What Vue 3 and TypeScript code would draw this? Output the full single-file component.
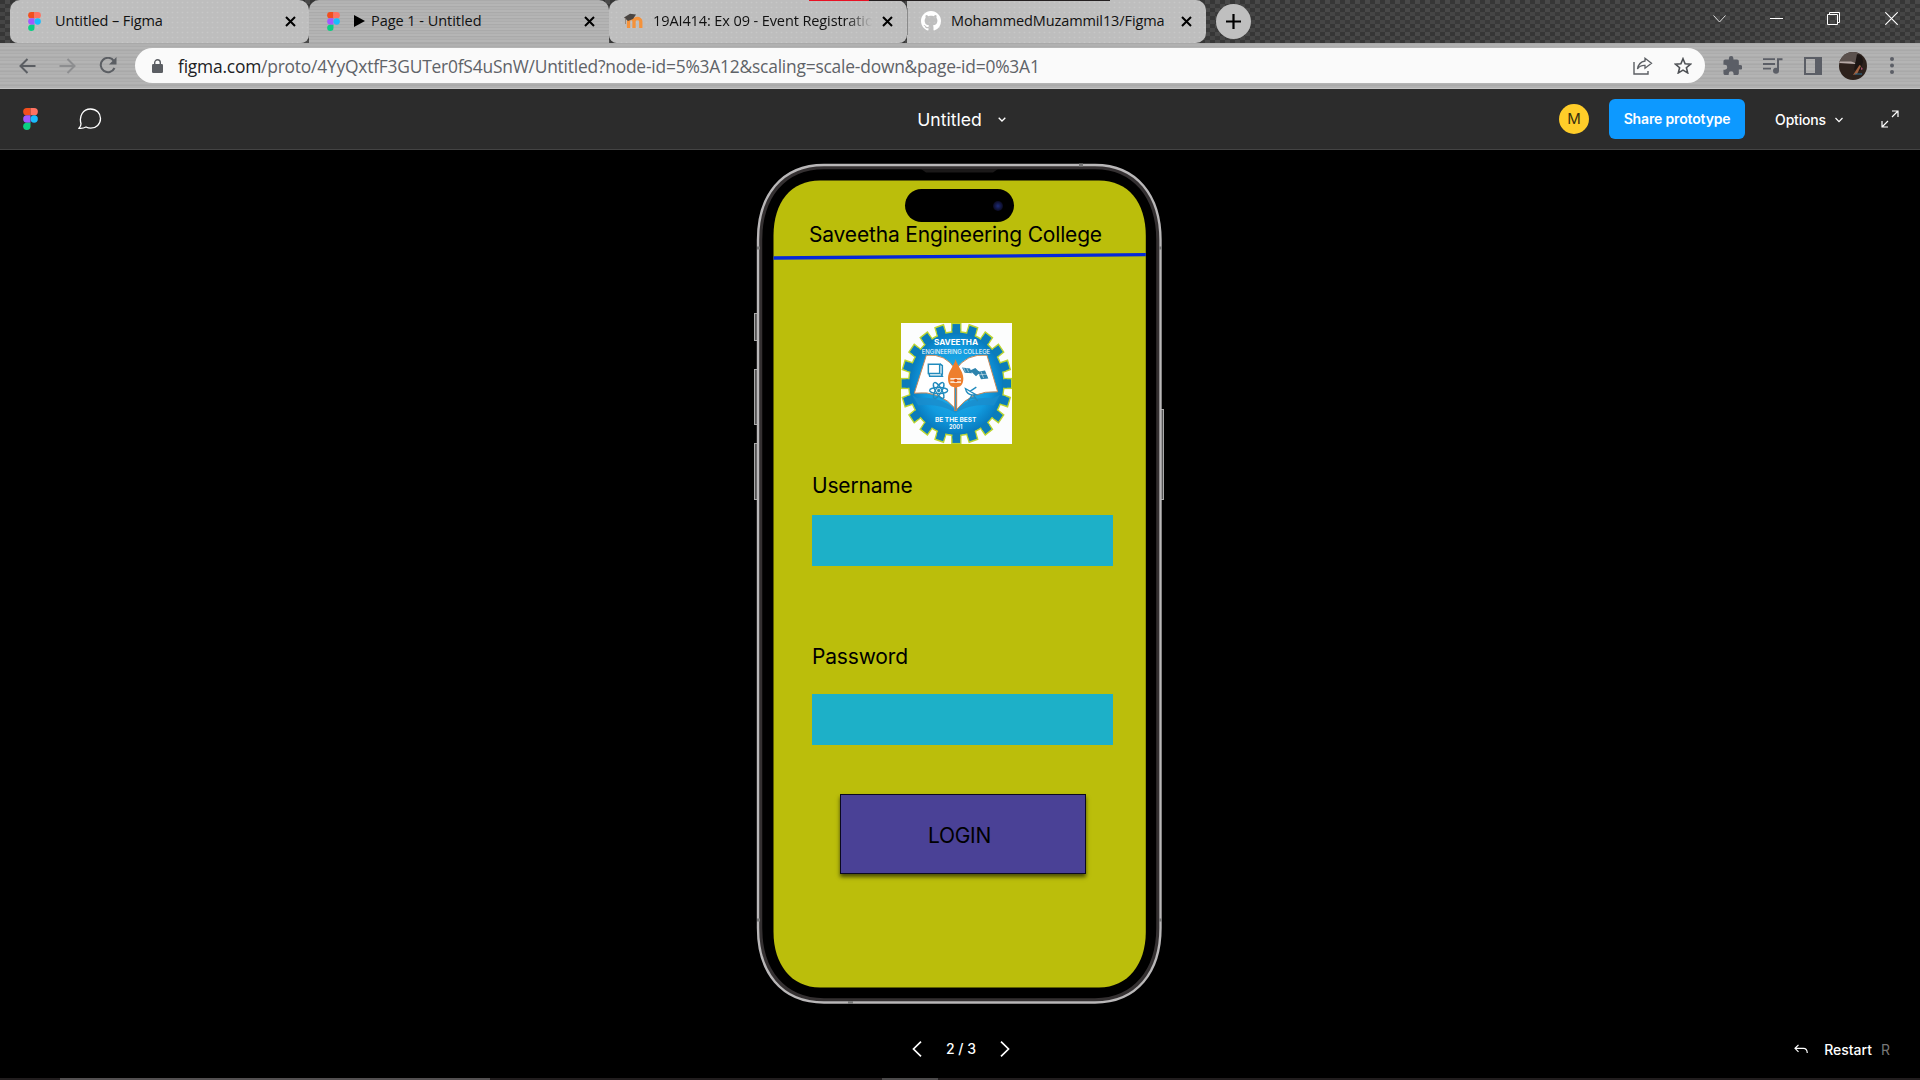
<script setup lang="ts">
interface Tab {
  title: string
  icon: 'figma' | 'moodle' | 'github'
  width: number
  active?: boolean
  play?: boolean
  spacing: string
}

const tabs: Tab[] = [
  { title: 'Untitled – Figma', icon: 'figma', width: 299, spacing: '-0.1px' },
  { title: 'Page 1 - Untitled', icon: 'figma', width: 300, active: true, play: true, spacing: '-0.04px' },
  { title: '19AI414: Ex 09 - Event Registration', icon: 'moodle', width: 298, spacing: '-0.1px' },
  { title: 'MohammedMuzammil13/Figma', icon: 'github', width: 299, spacing: '-0.1px' },
]

const toothAngles: number[] = Array.from({ length: 20 }, (_, i) => i * 18)
</script>

<template>
  <div class="window">
    <div class="tabstrip">
      <div class="edge"></div>
      <div
        v-for="tab in tabs"
        :key="tab.title"
        class="tab"
        :class="[tab.icon, { active: tab.active }]"
        :style="{ width: tab.width + 'px' }"
      >
        <svg v-if="tab.icon === 'figma'" class="fav" width="13" height="19" viewBox="0 0 20 30">
          <path d="M5 0h5v10H5A5 5 0 0 1 5 0z" fill="#f24e1e" />
          <path d="M10 0h5a5 5 0 0 1 0 10h-5z" fill="#ff7262" />
          <path d="M5 10h5v10H5a5 5 0 0 1 0-10z" fill="#a259ff" />
          <circle cx="15" cy="15" r="5" fill="#1abcfe" />
          <path d="M5 20h5v5a5 5 0 1 1-5-5z" fill="#0acf83" />
        </svg>
        <svg v-else-if="tab.icon === 'moodle'" class="fav" width="20" height="16" viewBox="0 0 20 16">
          <path d="M4.500 15V8.500c0-4 5.500-4 5.500 0V15M10 15V8.500c0-4 6.800-4 6.800 0V15" fill="none" stroke="#f5923a" stroke-width="3.300" />
          <path d="M0 4.500L6 .8l6 .8-3 4.500-5 1.800z" fill="#4a4542" />
          <path d="M1.500 5v6" stroke="#8a7c70" stroke-width=".8" />
        </svg>
        <svg v-else class="fav" width="20" height="20" viewBox="0 0 16 16">
          <path fill="#fff" d="M8 0C3.580 0 0 3.580 0 8c0 3.540 2.290 6.530 5.470 7.590.4.070.550-.170.550-.380 0-.190-.010-.820-.010-1.490-2.010.370-2.530-.490-2.690-.940-.090-.230-.480-.940-.820-1.130-.280-.150-.680-.520-.010-.530.630-.010 1.080.580 1.230.820.720 1.210 1.870.870 2.330.660.070-.520.280-.870.510-1.070-1.780-.200-3.640-.890-3.640-3.950 0-.870.310-1.590.820-2.150-.080-.200-.360-1.020.080-2.120 0 0 .670-.210 2.200.820.640-.180 1.320-.270 2-.270s1.360.090 2 .270c1.530-1.040 2.200-.820 2.200-.820.440 1.100.160 1.920.080 2.120.510.560.820 1.270.820 2.150 0 3.070-1.870 3.750-3.650 3.950.290.250.540.730.540 1.480 0 1.070-.010 1.930-.010 2.200 0 .210.150.460.550.380A8.010 8.010 0 0 0 16 8c0-4.420-3.580-8-8-8z" />
        </svg>
        <svg v-if="tab.play" class="play" width="11" height="12" viewBox="0 0 11 12"><path d="M0 0l11 6-11 6z" fill="#000" /></svg>
        <span class="title" :style="{ letterSpacing: tab.spacing }">{{ tab.title }}</span>
        <svg class="close" width="11" height="11" viewBox="0 0 11 11"><path d="M1 1l9 9M10 1l-9 9" stroke="#000" stroke-width="2" /></svg>
      </div>
      <button class="newtab">
        <svg width="15" height="15" viewBox="0 0 15 15"><path d="M7.500 0v15M0 7.500h15" stroke="#000" stroke-width="2.200" /></svg>
      </button>
      <div class="wincontrols">
        <svg width="13" height="8" viewBox="0 0 13 8"><path d="M.5.5l6 6.500 6-6.500" fill="none" stroke="#ddd" /></svg>
        <svg width="13" height="13" viewBox="0 0 13 13"><path d="M0 6.500h13" stroke="#fff" /></svg>
        <svg width="13" height="13" viewBox="0 0 13 13"><path d="M.5 2.500h10v10H.5zM2.500 2.500v-2h10v10h-2" fill="none" stroke="#fff" /></svg>
        <svg width="13" height="13" viewBox="0 0 13 13"><path d="M.3.3l12.400 12.400M12.700.3L.3 12.700" stroke="#fff" stroke-width="1.200" /></svg>
      </div>
      <div class="topline"></div>
    </div>

    <div class="toolbar">
      <svg class="back" width="17" height="16" viewBox="0 0 17 16"><path d="M16.500 8H1.500M8.500 1L1.500 8l7 7" fill="none" stroke="#5b5e63" stroke-width="2" /></svg>
      <svg class="fwd" width="17" height="16" viewBox="0 0 17 16"><path d="M.5 8h15M8.500 1l7 7-7 7" fill="none" stroke="#8d8e90" stroke-width="2" /></svg>
      <svg class="reload" width="18" height="17" viewBox="0 0 18 17">
        <path d="M14.800 3.800A7.200 7.200 0 1 0 15.500 11" fill="none" stroke="#5b5e63" stroke-width="2" />
        <path d="M17.500 0v7.500H10z" fill="#5b5e63" />
      </svg>
      <div class="omnibox">
        <svg class="lock" width="11" height="14" viewBox="0 0 11 14">
          <rect y="5" width="11" height="9" rx="1.200" fill="#5b5e63" />
          <path d="M2.700 5.500V3.600a2.800 2.800 0 0 1 5.600 0v1.900" fill="none" stroke="#5b5e63" stroke-width="1.400" />
        </svg>
        <span class="url"><b>figma.com</b>/proto/4YyQxtfF3GUTer0fS4uSnW/Untitled?node-id=5%3A12&amp;scaling=scale-down&amp;page-id=0%3A1</span>
        <svg class="share" width="20" height="18" viewBox="0 0 20 18">
          <path d="M1 5v12h14v-3" fill="none" stroke="#5b5e63" stroke-width="1.400" />
          <path d="M12 1.200l6.500 5-6.500 5V8.400c-3.500-.2-5.800 1-7.500 3.600.7-4.700 3.500-7.300 7.500-8z" fill="none" stroke="#5b5e63" stroke-width="1.300" />
        </svg>
        <svg width="18" height="17" viewBox="0 0 18 17"><path d="M9 1.700l2.100 5 5.400.5-4.100 3.500 1.300 5.200L9 13.100l-4.700 2.800 1.300-5.200-4.100-3.500 5.400-.5z" fill="none" stroke="#4e5155" stroke-width="1.600" /></svg>
      </div>
      <svg class="puzzle" width="19" height="19" viewBox="1.500 1 21 21"><path fill="#5b5e66" d="M20.500 11H19V7c0-1.100-.9-2-2-2h-4V3.500a2.500 2.500 0 0 0-5 0V5H4c-1.100 0-2 .9-2 2v3.800h1.500a2.700 2.700 0 0 1 0 5.400H2V20c0 1.100.9 2 2 2h3.800v-1.500a2.700 2.700 0 0 1 5.400 0V22H17c1.100 0 2-.9 2-2v-4h1.500a2.500 2.500 0 0 0 0-5z" /></svg>
      <svg class="music" width="20" height="16" viewBox="0 0 20 16">
        <path d="M0 1.200h12M0 6h12M0 10.700h8" stroke="#5b5e66" stroke-width="1.800" />
        <circle cx="13" cy="12.700" r="3" fill="#5b5e66" />
        <path d="M15 13V1.200h4.500" fill="none" stroke="#5b5e66" stroke-width="2" />
      </svg>
      <svg class="panel" width="18" height="18" viewBox="0 0 18 18"><path fill="#5b5e66" fill-rule="evenodd" d="M0 0h18v18H0zM2 2v14h9V2z" /></svg>
      <svg class="avatar" width="28" height="28" viewBox="0 0 28 28">
        <defs><clipPath id="av"><circle cx="14" cy="14" r="14" /></clipPath></defs>
        <g clip-path="url(#av)">
          <rect width="28" height="28" fill="#2d211c" />
          <path d="M0 0h20l-3 10H0z" fill="#5b514d" />
          <path d="M0 9.500h12l5 1.500-1 1L0 11z" fill="#b7a9a6" />
          <path d="M18 2q6 1 6 8l-3 9-6-1z" fill="#1c1513" />
          <path d="M20.500 13l1.500 1-4 8-4 1z" fill="#a0603f" />
          <path d="M22 15l2 2-2 1z" fill="#a34b6c" />
          <path d="M16 22h7" stroke="#2c6f91" stroke-width="1.200" />
        </g>
      </svg>
      <svg class="dots" width="4" height="17" viewBox="0 0 4 17"><g fill="#5b5e66"><circle cx="2" cy="2" r="2" /><circle cx="2" cy="8.500" r="2" /><circle cx="2" cy="15" r="2" /></g></svg>
    </div>

    <header class="appbar">
      <div class="side">
        <svg class="applogo" width="15" height="22" viewBox="0 0 20 30">
          <path d="M5 0h5v10H5A5 5 0 0 1 5 0z" fill="#f24e1e" />
          <path d="M10 0h5a5 5 0 0 1 0 10h-5z" fill="#ff7262" />
          <path d="M5 10h5v10H5a5 5 0 0 1 0-10z" fill="#a259ff" />
          <circle cx="15" cy="15" r="5" fill="#1abcfe" />
          <path d="M5 20h5v5a5 5 0 1 1-5-5z" fill="#0acf83" />
        </svg>
        <svg class="comment" width="24" height="22" viewBox="0 0 24 22"><path d="M1 20.300c1.500-1.500 2-2.700 2-4.500C.8 8 5 1 12.500 1 18.500 1 22.500 5.300 22.500 10.500c0 5.600-4.300 9.700-9.800 9.700-2 0-3.300-.5-4.700-1.200-2.200 1.200-4.500 1.600-7 1.300z" fill="none" stroke="#fff" stroke-width="1.300" /></svg>
      </div>
      <div class="doc">
        <span>Untitled</span>
        <svg width="8" height="5" viewBox="0 0 8 5"><path d="M.7.7L4 4 7.300.7" fill="none" stroke="#fff" stroke-width="1.300" /></svg>
      </div>
      <div class="side right">
        <div class="user">M</div>
        <button class="sharebtn">Share prototype</button>
        <span class="options">Options</span>
        <svg class="optchev" width="8" height="6" viewBox="0 0 8 6"><path d="M.5 1L4 4.700 7.500 1" fill="none" stroke="#fff" stroke-width="1.200" /></svg>
        <svg class="expand" width="18" height="18" viewBox="0 0 18 18"><path d="M11 1h6v6M17 1l-6 6M1 11v6h6M1 17l6-6" fill="none" stroke="#fff" stroke-width="1.200" /></svg>
      </div>
    </header>

    <main class="stage">
      <div class="phone">
        <svg class="frame" width="412" height="842" viewBox="753 163 412 842">
          <g fill="#555" stroke="#a9a9a9" stroke-width="1">
            <rect x="754.500" y="313.500" width="4" height="27" />
            <rect x="754.500" y="369.500" width="4" height="55" />
            <rect x="754.500" y="443.500" width="4" height="56" />
            <rect x="1159.500" y="409.500" width="4" height="90" />
          </g>
          <path d="M824 165H1095C1137 165 1160.500 196 1160.500 240V928C1160.500 972 1137 1002.500 1095 1002.500H824C781 1002.500 758 972 758 928V240C758 196 781 165 824 165z" fill="#000" />
          <path d="M824 167.500H1095C1135 167.500 1158 198 1158 240V928C1158 970 1135 1000 1095 1000H824C783 1000 760.500 970 760.500 928V240C760.500 198 783 167.500 824 167.500z" fill="none" stroke="#343031" stroke-width="3.500" />
          <path d="M824 165H1095C1137 165 1160.500 196 1160.500 240V928C1160.500 972 1137 1002.500 1095 1002.500H824C781 1002.500 758 972 758 928V240C758 196 781 165 824 165z" fill="none" stroke="#b9b7b8" stroke-width="2.400" />
          <path d="M921 169h77l-5 3.500h-67z" fill="#1b1919" />
          <path d="M1079 165h4M757 248h3M1159 248h3M757 920h3M1159 920h3M848 1002.500h5" stroke="#777" stroke-width="3" />
          <path d="M820 180.500H1099C1128 180.500 1145.800 202 1145.800 236V932C1145.800 964 1128 987.500 1099 987.500H820C791 987.500 773.500 964 773.500 932V236C773.500 202 791 180.500 820 180.500z" fill="#bbbe0b" />
          <path d="M773.500 258L1145.800 254.700" stroke="#0528da" stroke-width="3.300" />
        </svg>
        <div class="screen">
          <div class="island"><i></i></div>
          <h1>Saveetha Engineering College</h1>
          <svg class="crest" width="111" height="121" viewBox="0 0 333 364" preserveAspectRatio="none">
            <defs>
              <radialGradient id="sea"><stop offset="0" stop-color="#2ab6ee" /><stop offset=".7" stop-color="#119ade" /><stop offset="1" stop-color="#0879bd" /></radialGradient>
            </defs>
            <rect width="333" height="364" fill="#fcfdfd" />
            <g transform="translate(166 182) scale(1 1.090)">
              <g fill="#0c7cba" stroke="#bcd531" stroke-width="4">
                <rect v-for="a in toothAngles" :key="a" x="-13.500" y="-166" width="27" height="40" :transform="`rotate(${a})`" />
              </g>
              <circle r="143" fill="url(#sea)" stroke="#bcd531" stroke-width="4" />
              <g fill="#0c7cba">
                <rect v-for="a in toothAngles" :key="a" x="-11.500" y="-152" width="23" height="14" :transform="`rotate(${a})`" />
              </g>
            </g>
            <path d="M34 217l16 9q70-8 113 36 48-44 112-36l22-10-18 32q-70-8-115 22-48-30-112-22z" fill="#1a8ccc" opacity=".8" />
            <path d="M76 97q58-6 88 44 32-50 94-44l32 110q-78-5-124 54-48-60-126-50z" fill="#fff" stroke="#c98a5a" stroke-width="3" />
            <path d="M164 190v74" stroke="#dc7f43" stroke-width="9" /><path d="M164 196v66" stroke="#19a0dd" stroke-width="3" />
            <path d="M164 108c5 22 23 36 23 58 0 20-9 27-23 27s-23-7-23-27c0-22 18-36 23-58z" fill="#ee7f2d" />
            <path d="M148 168h32M148 178h32" stroke="#fbe3cf" stroke-width="5" /><circle cx="164" cy="173" r="5" fill="#e25a16" />
            <g fill="none" stroke="#218bbd" stroke-width="4">
              <path d="M82 124h34v28H82zM84 152l2 8h38l-4-8M116 122l8 6v28" stroke-width="4.500" />
              <ellipse cx="113" cy="203" rx="27" ry="9" /><ellipse cx="113" cy="203" rx="27" ry="9" transform="rotate(60 113 203)" /><ellipse cx="113" cy="203" rx="27" ry="9" transform="rotate(120 113 203)" />
              <path d="M193 197q5 24 33 19zM208 205l18-12M214 215l-12 20M216 215l14 20M206 226h20" />
            </g>
            <circle cx="113" cy="203" r="5" fill="#218bbd" />
            <path d="M183 134l24 3 6 14-22-1zM207 143l16-8 14 14-12 11zM230 147l22-4 10 24-22 2z" fill="#2d83ad" />
            <path d="M188 135l5 12M197 136l6 12M240 146l8 20M232 156l26-2" stroke="#fff" stroke-width="1.500" />
            <g fill="#fff" text-anchor="middle" font-family="Inter, sans-serif">
              <text x="165" y="67" font-size="23" font-weight="700" textLength="132" lengthAdjust="spacingAndGlyphs">SAVEETHA</text>
              <text x="165" y="92" font-size="18" textLength="205" lengthAdjust="spacingAndGlyphs">ENGINEERING COLLEGE</text>
              <text x="164" y="299" font-size="19" font-weight="600" textLength="124" lengthAdjust="spacingAndGlyphs">BE THE BEST</text>
              <text x="164" y="320" font-size="18" font-weight="600" textLength="40" lengthAdjust="spacingAndGlyphs">2001</text>
            </g>
          </svg>
          <label class="user-label">Username</label>
          <div class="field"></div>
          <label class="pass-label">Password</label>
          <div class="field second"></div>
          <button class="login">LOGIN</button>
        </div>
      </div>
      <footer class="controls">
        <div class="pager">
          <svg width="10" height="16" viewBox="0 0 10 16"><path d="M9 .7L1.500 8 9 15.300" fill="none" stroke="#fff" stroke-width="1.700" /></svg>
          <span>2 / 3</span>
          <svg width="10" height="16" viewBox="0 0 10 16"><path d="M1 .7L8.500 8 1 15.300" fill="none" stroke="#fff" stroke-width="1.700" /></svg>
        </div>
        <div class="restart">
          <svg width="14" height="10" viewBox="0 0 14 10"><path d="M4.500.8L1 4.300l3.500 3.500M1 4.300h8.500Q13 4.300 13.300 9" fill="none" stroke="#fff" stroke-width="1.200" /></svg>
          <span>Restart</span><em>R</em>
        </div>
      </footer>
    </main>
    <div class="taskbar"><i class="t1"></i><i class="t2"></i></div>
  </div>
</template>

<style>
body { margin: 0; background: #000; overflow: hidden; }
</style>

<style scoped>
* { box-sizing: border-box; }
.window { width: 1920px; height: 1080px; display: flex; flex-direction: column; background: #000; font-family: Inter, sans-serif; overflow: hidden; }
svg { display: block; flex: none; }
button { border: 0; padding: 0; font-family: inherit; }

.tabstrip {
  position: relative; height: 43px; flex: none; display: flex;
  background-image: conic-gradient(#494949 25%, #393939 0 50%, #454545 0 75%, #363636 0);
  background-size: 10px 8px;
}
.edge { width: 10px; flex: none; }
.tab {
  display: flex; align-items: center; flex: none; padding: 0 13px 1px 18px; height: 43px;
  border-radius: 10px 10px 8px 8px; background-color: #bebebe;
  background-image: radial-gradient(#c7c7c7 25%, transparent 30%); background-size: 5px 5px;
  font-family: "Open Sans", sans-serif; font-size: 14.5px; color: #111;
}
.tab.active { border-radius: 10px 10px 0 0; padding-right: 14px; background: repeating-linear-gradient(#aaa 0 1px, #b2b2b2 1px 3px, #adadad 3px 4px, #b5b5b5 4px 6px); }
.tab.moodle { padding-left: 15px; padding-right: 14px; }
.tab.github { padding-left: 14px; padding-right: 14px; border-radius: 0 10px 10px 0; background-image: linear-gradient(#8a8a8a, #8a8a8a), radial-gradient(#c7c7c7 25%, transparent 30%); background-size: 1px 27px, 5px 5px; background-position: 0 8px, 0 0; background-repeat: no-repeat, repeat; }
.fav { margin-right: 14px; }
.moodle .fav { margin-right: 9px; }
.github .fav { margin-right: 10px; }
.play { margin-right: 6px; }
.title { flex: 1; white-space: nowrap; overflow: hidden; line-height: 24px; }
.moodle .title { flex: none; width: 219px; margin-right: auto; -webkit-mask-image: linear-gradient(90deg, #000 88%, transparent); mask-image: linear-gradient(90deg, #000 88%, transparent); }
.newtab { width: 35px; height: 35px; margin: 4px 0 0 10px; border-radius: 50%; background: #bfbfbf; display: flex; align-items: center; justify-content: center; flex: none; }
.wincontrols { margin-left: auto; display: flex; align-items: center; height: 37px; gap: 45px; padding-right: 22px; }
.wincontrols svg:nth-child(1) { margin-right: -1px; }
.wincontrols svg:nth-child(2) { margin-right: -1px; }
.topline { position: absolute; left: 809px; top: 0; width: 301px; height: 1px; background: linear-gradient(90deg, #e81123 60px, #231f20 60px); }

.toolbar {
  height: 46px; flex: none; display: flex; align-items: center; border-bottom: 1px solid #c4c4c4;
  background: repeating-linear-gradient(#a9a9a9 0 1px, #b1b1b1 1px 3px, #acacac 3px 4px, #b4b4b4 4px 6px, #adadad 6px 7px);
}
.back { margin-left: 19px; }
.fwd { margin-left: 23px; }
.reload { margin-left: 23px; }
.omnibox { width: 1570px; height: 35px; margin-left: 18px; border-radius: 18px; background: #fafafa; display: flex; align-items: center; padding: 0 13px 0 17px; }
.lock { margin-right: 15px; }
.url { flex: 1; font-family: "Open Sans", sans-serif; font-size: 17.4px; line-height: 30px; color: #5f6368; white-space: nowrap; letter-spacing: -0.21px; }
.url b { font-weight: 400; color: #202124; }
.share { margin-right: 21px; }
.puzzle { margin-left: 18px; }
.music { margin-left: 21px; }
.panel { margin-left: 21px; }
.avatar { margin-left: 17px; }
.dots { margin-left: 23px; }

.appbar { height: 61px; flex: none; display: flex; align-items: center; background: #2c2c2c; border-bottom: 1px solid #444; color: #fff; }
.side { flex: 1; display: flex; align-items: center; }
.applogo { margin-left: 23px; }
.comment { margin-left: 40px; }
.doc { display: flex; align-items: center; font-size: 17.6px; gap: 16px; padding-left: 3px; }
.doc span { padding-top: 1px; }
.right { justify-content: flex-end; }
.user { width: 30px; height: 30px; border-radius: 50%; background: #ffcd29; color: #37300f; font-size: 15px; line-height: 30px; text-align: center; }
.sharebtn { width: 136px; height: 40px; margin: 0 30px 0 20px; padding-bottom: 2px; border-radius: 6px; background: #0d99ff; color: #fff; font-size: 14px; font-weight: 600; letter-spacing: -0.15px; }
.options { font-size: 14px; font-weight: 500; letter-spacing: -0.17px; }
.optchev { margin: 2px 38px 0 9px; }
.expand { margin-right: 21px; }

.stage { flex: 1; display: flex; flex-direction: column; align-items: center; padding-top: 13px; }
.phone { position: relative; width: 412px; height: 842px; margin-right: 2px; padding: 17px 20px; flex: none; }
.frame { position: absolute; left: 0; top: 0; }
.screen { position: relative; height: 807px; display: flex; flex-direction: column; font-size: 21px; letter-spacing: -0.17px; color: #000; }
.island { width: 109px; height: 33px; margin: 9px 0 0 132px; border-radius: 17px; background: #000; display: flex; align-items: center; justify-content: flex-end; padding-right: 11px; }
.island i { width: 10px; height: 10px; border-radius: 50%; background: radial-gradient(#1d2a78, #0b0b22 70%); }
h1 { margin: 0 0 0 36px; font-size: 21px; line-height: 26px; font-weight: 400; white-space: nowrap; }
.crest { margin: 75px 0 0 128px; }
label { line-height: 26px; margin-left: 39px; }
.user-label { margin-top: 29px; }
.field { width: 301px; height: 51px; margin: 16px 0 0 39px; background: #1db0c8; }
.pass-label { margin-top: 78px; }
.field.second { margin-top: 24px; }
.login { width: 246px; height: 80px; margin: 49px 0 0 67px; padding: 2px 7px 0 0; border: 1px solid #0b0920; background: #4a4196; font-size: 21px; letter-spacing: -0.3px; color: #000; box-shadow: 0 3px 4px rgba(0, 0, 0, .6); }

.controls { display: flex; align-self: stretch; align-items: center; height: 20px; margin-top: 34px; color: #fff; font-size: 14px; font-weight: 500; }
.pager { display: flex; align-items: center; width: 98px; margin-left: 912px; justify-content: space-between; }
.pager span { padding-bottom: 1px; }
.restart { display: flex; align-items: center; margin-left: auto; padding-right: 30px; }
.restart span { margin: 0 9px 0 16px; }
.restart em { font-style: normal; font-weight: 400; color: #777; }
.taskbar { height: 2px; flex: none; display: flex; background: #211d1e; }
.t1 { width: 430px; margin-left: 60px; background: #535051; }
.t2 { width: 56px; margin-left: 392px; background: #4c4a4b; }
</style>
